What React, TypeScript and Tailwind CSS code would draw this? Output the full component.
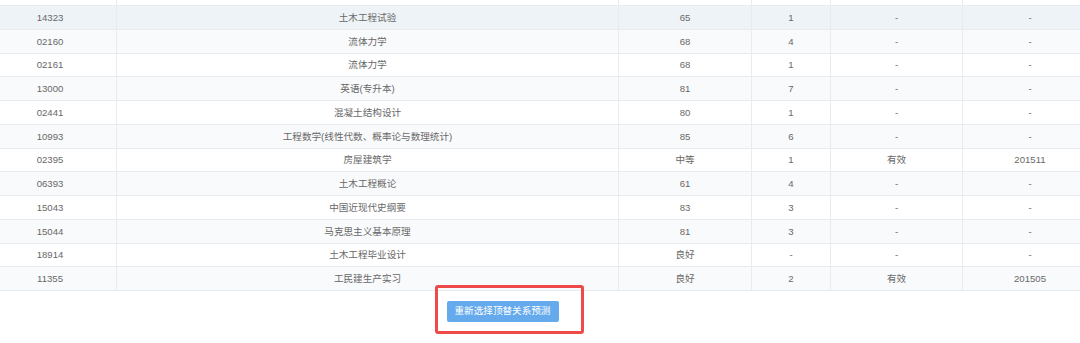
import React from 'react';

type Row = [string, string, string, string, string, string];

const rows: Row[] = [
  ['14323', '土木工程试验', '65', '1', '-', '-'],
  ['02160', '流体力学', '68', '4', '-', '-'],
  ['02161', '流体力学', '68', '1', '-', '-'],
  ['13000', '英语(专升本)', '81', '7', '-', '-'],
  ['02441', '混凝土结构设计', '80', '1', '-', '-'],
  ['10993', '工程数学(线性代数、概率论与数理统计)', '85', '6', '-', '-'],
  ['02395', '房屋建筑学', '中等', '1', '有效', '201511'],
  ['06393', '土木工程概论', '61', '4', '-', '-'],
  ['15043', '中国近现代史纲要', '83', '3', '-', '-'],
  ['15044', '马克思主义基本原理', '81', '3', '-', '-'],
  ['18914', '土木工程毕业设计', '良好', '-', '-', '-'],
  ['11355', '工民建生产实习', '良好', '2', '有效', '201505'],
];

const gridCols = 'grid grid-cols-[133px_502px_133px_79px_132px_134px]';

const App: React.FC = () => {
  return (
    <div
      className="w-[1080px] h-[343px] overflow-hidden bg-white text-[#686868] text-[9.6px] leading-[14px]"
      style={{ fontFamily: '"Liberation Sans", "Noto Sans CJK SC", sans-serif' }}
    >
      {/* 成绩表格 */}
      <div className="ml-[-16px] w-[1113px]">
        {/* 上一行被截掉的部分 */}
        <div className={`${gridCols} h-[6px] border-b border-[#e9ecef]`}>
          {[0, 1, 2, 3, 4, 5].map((i) => (
            <div key={i} className={i < 5 ? 'border-r border-[#e9ecef]' : ''} />
          ))}
        </div>

        {rows.map((row, idx) => {
          const bg = idx === 0 ? 'bg-[#eef3f7]' : idx % 2 === 1 ? 'bg-[#f9fafb]' : 'bg-white';
          return (
            <div key={idx} className={`${gridCols} h-[23.75px] border-b border-[#e9ecef] ${bg}`}>
              {row.map((cell, ci) => (
                <div
                  key={ci}
                  className={`flex items-center justify-center pt-[1px] ${ci < 5 ? 'border-r border-[#e9ecef]' : ''}`}
                >
                  {cell}
                </div>
              ))}
            </div>
          );
        })}
      </div>

      {/* 标注框 + 按钮 */}
      <div className="flex mt-[-6px]">
        <div className="ml-[435px] w-[149px] h-[49px] border-[3.5px] border-[#ef4a4a] rounded-[3px] pl-[8.5px] pt-[12.5px]">
          <button className="w-[112px] h-[21px] rounded-[2px] bg-[#64aaec] text-white text-[9.6px] flex items-center justify-center">
            重新选择顶替关系预测
          </button>
        </div>
      </div>
    </div>
  );
};

export default App;
